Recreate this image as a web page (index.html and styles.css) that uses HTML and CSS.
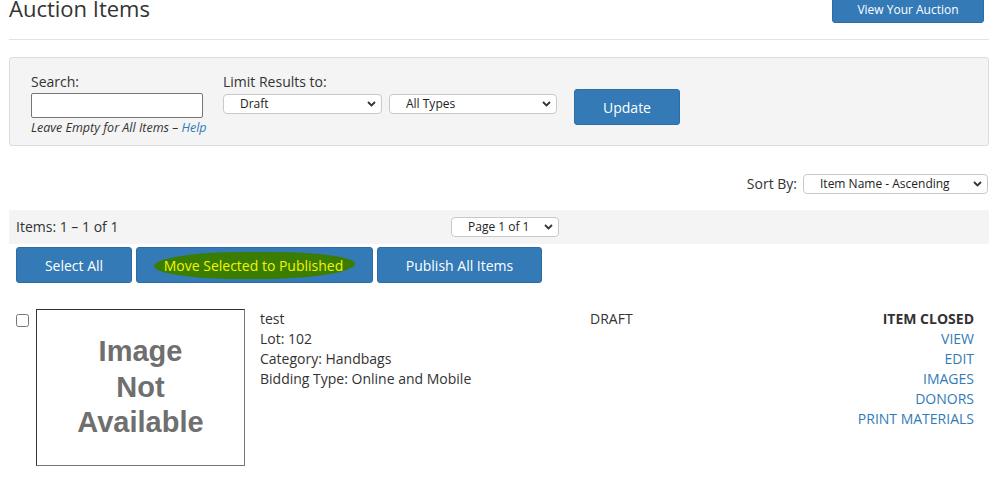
FILE: index.html
```html
<!DOCTYPE html>
<html lang="en">
<head>
<meta charset="utf-8">
<title>Auction Items</title>
<link rel="stylesheet" href="styles.css">
</head>
<body>
<div class="page">
  <div class="header">
    <h1 class="title">Auction Items</h1>
    <button class="btn btn-view">View Your Auction</button>
  </div>

  <div class="filter-panel">
    <div class="search-col">
      <label class="field-label">Search:</label>
      <input type="text" class="search-input">
      <div class="hint">Leave Empty for All Items &ndash; <a href="#" class="link">Help</a></div>
    </div>
    <div class="limit-col">
      <label class="field-label">Limit Results to:</label>
      <div class="select-row">
        <span class="select-wrap sel-status">
          <select class="sel"><option>Draft</option></select>
          <svg class="chev" width="9" height="6" viewBox="0 0 9 6"><path d="M1 1 L4.5 4.5 L8 1" fill="none" stroke="#333" stroke-width="1.8"/></svg>
        </span>
        <span class="select-wrap sel-type">
          <select class="sel"><option>All Types</option></select>
          <svg class="chev" width="9" height="6" viewBox="0 0 9 6"><path d="M1 1 L4.5 4.5 L8 1" fill="none" stroke="#333" stroke-width="1.8"/></svg>
        </span>
      </div>
    </div>
    <div class="update-col">
      <button class="btn btn-update">Update</button>
    </div>
  </div>

  <div class="sort-row">
    <span class="sort-label">Sort By:</span>
    <span class="select-wrap sel-sort">
      <select class="sel"><option>Item Name - Ascending</option></select>
      <svg class="chev" width="9" height="6" viewBox="0 0 9 6"><path d="M1 1 L4.5 4.5 L8 1" fill="none" stroke="#333" stroke-width="1.8"/></svg>
    </span>
  </div>

  <div class="items-bar">
    <span class="items-count">Items: 1 &ndash; 1 of 1</span>
    <span class="select-wrap sel-page">
      <select class="sel"><option>Page 1 of 1</option></select>
      <svg class="chev" width="9" height="6" viewBox="0 0 9 6"><path d="M1 1 L4.5 4.5 L8 1" fill="none" stroke="#333" stroke-width="1.8"/></svg>
    </span>
  </div>

  <div class="action-row">
    <button class="btn btn-act btn-select">Select All</button>
    <button class="btn btn-act btn-move"><span class="marker">Move Selected to Published</span></button>
    <button class="btn btn-act btn-publish">Publish All Items</button>
  </div>

  <div class="item-row">
    <input type="checkbox" class="item-check">
    <div class="no-image">Image<br>Not<br>Available</div>
    <div class="item-details">
      <div>test</div>
      <div>Lot: 102</div>
      <div>Category: Handbags</div>
      <div>Bidding Type: Online and Mobile</div>
    </div>
    <div class="item-status">DRAFT</div>
    <div class="item-actions">
      <div class="closed">ITEM CLOSED</div>
      <a href="#" class="link">VIEW</a>
      <a href="#" class="link">EDIT</a>
      <a href="#" class="link">IMAGES</a>
      <a href="#" class="link">DONORS</a>
      <a href="#" class="link">PRINT MATERIALS</a>
    </div>
  </div>
</div>
</body>
</html>
```

FILE: styles.css
```css
* { box-sizing: border-box; }

html, body {
  margin: 0;
  padding: 0;
  background: #fff;
}

body {
  font-family: "Open Sans", "Liberation Sans", sans-serif;
  font-size: 14px;
  line-height: 20px;
  color: #333;
  overflow: hidden;
}

.page {
  padding: 0 6px 0 9px;
}

.link {
  color: #337ab7;
  text-decoration: none;
}

/* Header */
.header {
  display: flex;
  justify-content: space-between;
  align-items: flex-start;
  margin-top: -11px;
  height: 51px;
  border-bottom: 1px solid #e3e3e3;
}

.title {
  margin: 4px 0 0 0;
  font-size: 22px;
  line-height: 30px;
  font-weight: 400;
  color: #333;
}

.btn {
  font-family: "Open Sans", "Liberation Sans", sans-serif;
  background: #337ab7;
  border: 1px solid #2e6da4;
  border-radius: 3px;
  color: #fff;
  cursor: pointer;
  padding: 0;
}

.btn-view {
  width: 152px;
  height: 34px;
  margin-right: 5px;
  font-size: 12px;
  line-height: 16px;
  padding-top: 8px;
}

/* Filter panel */
.filter-panel {
  margin-top: 17px;
  display: flex;
  align-items: flex-start;
  background: #f4f4f4;
  border: 1px solid #dcdcdc;
  border-radius: 3px;
  padding: 14px 20px 10px 21px;
}

.field-label {
  display: block;
  font-size: 14px;
  line-height: 20px;
}

.search-col {
  width: 192px;
}

.search-input {
  display: block;
  margin-top: 1px;
  width: 172px;
  height: 25px;
  border: 1px solid #767676;
  border-radius: 2px;
  background: #fff;
  padding: 0 4px;
  font-family: inherit;
  font-size: 13px;
}

.hint {
  margin-top: 2px;
  font-size: 12.5px;
  line-height: 15px;
  font-style: italic;
  white-space: nowrap;
}

.limit-col {
  width: 351px;
}

.select-row {
  display: flex;
  gap: 7px;
  margin-top: 2px;
}

.select-wrap {
  position: relative;
  display: inline-block;
  height: 20px;
}

.sel {
  -webkit-appearance: none;
  appearance: none;
  display: block;
  width: 100%;
  height: 20px;
  margin: 0;
  border: 1px solid #c9c9c9;
  border-radius: 4px;
  background: #fff;
  color: #222;
  font-family: "Open Sans", "Liberation Sans", sans-serif;
  font-size: 12px;
  line-height: 18px;
  padding: 0 20px 0 16px;
}

.chev {
  position: absolute;
  right: 6px;
  top: 7px;
  pointer-events: none;
}

.sel-status { width: 159px; }
.sel-type { width: 168px; }
.sel-sort { width: 185px; }
.sel-page { width: 108px; }

.update-col {
  padding-top: 17px;
}

.btn-update {
  width: 106px;
  height: 36px;
  font-size: 14px;
}

/* Sort row */
.sort-row {
  margin-top: 28px;
  display: flex;
  justify-content: flex-end;
  align-items: center;
  gap: 6px;
  padding-right: 1px;
  height: 20px;
}

/* Items bar */
.items-bar {
  margin-top: 16px;
  height: 34px;
  background: #f4f4f4;
  display: grid;
  grid-template-columns: 435px auto;
  justify-content: start;
  align-items: center;
  padding: 0 7px;
}

/* Action buttons */
.action-row {
  margin-top: 3px;
  display: flex;
  gap: 4px;
  padding-left: 7px;
}

.btn-act {
  height: 36px;
  font-size: 14px;
}

.btn-select { width: 116px; }
.btn-move { width: 237px; }
.btn-publish { width: 165px; }

.marker {
  display: inline-block;
  color: #f4f400;
  background: #3a7d00;
  padding: 4px 12px 3px 10px;
  margin: 0 -11px;
  border-radius: 46% 42% 50% 44% / 55% 45% 60% 50%;
  line-height: 20px;
}

/* Item row */
.item-row {
  margin-top: 26px;
  display: flex;
  align-items: flex-start;
  padding: 0 15px 0 7px;
}

.item-check {
  width: 13px;
  height: 13px;
  margin: 5px 7px 0 0;
  flex: none;
}

.no-image {
  flex: none;
  width: 209px;
  height: 157px;
  border: 1px solid #777;
  border-top-color: #333;
  border-left-color: #333;
  display: flex;
  align-items: center;
  justify-content: center;
  text-align: center;
  font-family: "Liberation Sans", Arial, sans-serif;
  font-weight: 700;
  font-size: 29px;
  line-height: 35.5px;
  color: #6f6f6f;
  margin-right: 15px;
}

.item-details {
  width: 330px;
  flex: none;
}

.item-status {
  flex: 1;
}

.item-actions {
  text-align: right;
  display: flex;
  flex-direction: column;
  align-items: flex-end;
}

.closed {
  font-weight: 700;
}
```
